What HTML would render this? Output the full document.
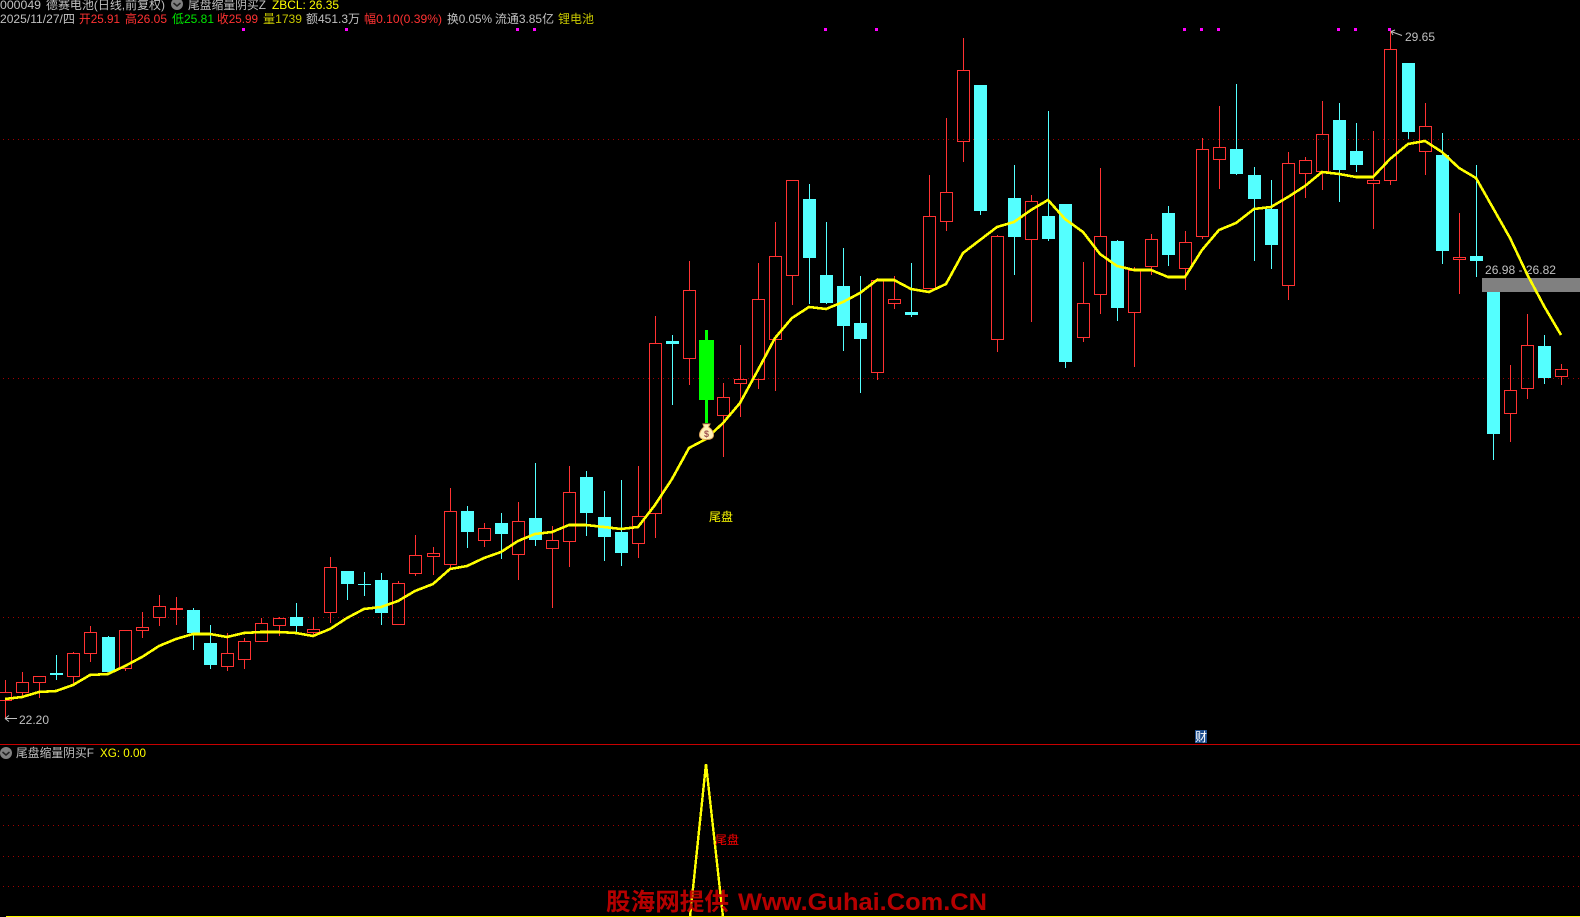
<!DOCTYPE html>
<html lang="zh-CN">
<head>
<meta charset="utf-8">
<title>000049 德赛电池</title>
<style>
html,body{margin:0;padding:0;background:#000;width:1580px;height:917px;overflow:hidden}
svg{display:block}
text{font-family:"Liberation Sans","WenQuanYi Zen Hei","Noto Sans CJK SC",sans-serif;font-size:12px}
.g{fill:#c0c0c0}.r{fill:#ff3232}.y{fill:#ffff00}.o{fill:#c8c800}
</style>
</head>
<body>
<svg width="1580" height="917" viewBox="0 0 1580 917" xmlns="http://www.w3.org/2000/svg">
<rect width="1580" height="917" fill="#000"/>

<!-- dotted grid -->
<path d="M3 139.5H1580M3 378.5H1580M3 617.5H1580M3 795.5H1580M3 825.5H1580M3 856.5H1580M3 886.5H1580" stroke="#a00000" stroke-width="1" stroke-dasharray="1 4" fill="none" shape-rendering="crispEdges"/>

<!-- red candles -->
<g shape-rendering="crispEdges" fill="none" stroke="#ff3232" stroke-width="1">
<path d="M5.5 680V692M-.5 692.5h12v8h-12zM5.5 700V719
M22.5 672V682M16.5 682.5h12v10h-12zM22.5 692V696
M33.5 676.5h12v6h-12zM39.5 682V698
M73.5 652V653M67.5 653.5h12v23h-12zM73.5 676V684
M90.5 626V632M84.5 632.5h12v21h-12zM90.5 653V662
M119.5 630.5h12v38h-12zM125.5 668V671
M142.5 612V627M136.5 627.5h12v3h-12zM142.5 630V638
M159.5 595V606M153.5 606.5h12v11h-12zM159.5 617V626
M176.5 597V625M170.5 608.5h12v1h-12z
M227.5 633V653M221.5 653.5h12v13h-12zM227.5 666V671
M244.5 638V641M238.5 641.5h12v18h-12zM244.5 659V669
M261.5 618V623M255.5 623.5h12v18h-12z
M279.5 617V618M273.5 618.5h12v7h-12zM279.5 625V636
M313.5 617V629M307.5 629.5h12v3h-12zM313.5 632V636
M330.5 557V567M324.5 567.5h12v45h-12zM330.5 612V623
M398.5 581V583M392.5 583.5h12v41h-12z
M415.5 535V555M409.5 555.5h12v18h-12zM415.5 573V576
M433.5 547V553M427.5 553.5h12v3h-12zM433.5 556V575
M450.5 488V511M444.5 511.5h12v53h-12zM450.5 564V569
M484.5 523V528M478.5 528.5h12v12h-12zM484.5 540V547
M518.5 502V521M512.5 521.5h12v33h-12zM518.5 554V580
M552.5 526V540M546.5 540.5h12v8h-12zM552.5 548V608
M569.5 466V492M563.5 492.5h12v49h-12zM569.5 541V567
M638.5 466V516M632.5 516.5h12v27h-12zM638.5 543V558
M655.5 316V343M649.5 343.5h12v170h-12zM655.5 513V538
M689.5 261V290M683.5 290.5h12v68h-12zM689.5 358V385
M723.5 383V397M717.5 397.5h12v18h-12zM723.5 415V457
M740.5 345V379M734.5 379.5h12v4h-12zM740.5 383V417
M758.5 263V299M752.5 299.5h12v80h-12zM758.5 379V389
M775.5 222V256M769.5 256.5h12v83h-12zM775.5 339V391
M786.5 180.5h12v95h-12zM792.5 275V305
M877.5 278V280M871.5 280.5h12v92h-12zM877.5 372V380
M894.5 276V299M888.5 299.5h12v4h-12zM894.5 303V309
M929.5 175V216M923.5 216.5h12v72h-12z
M946.5 118V192M940.5 192.5h12v29h-12zM946.5 221V231
M963.5 38V70M957.5 70.5h12v71h-12zM963.5 141V162
M997.5 235V236M991.5 236.5h12v103h-12zM997.5 339V352
M1031.5 195V201M1025.5 201.5h12v38h-12zM1031.5 239V322
M1083.5 262V303M1077.5 303.5h12v34h-12zM1083.5 337V342
M1100.5 168V236M1094.5 236.5h12v58h-12zM1100.5 294V314
M1134.5 267V270M1128.5 270.5h12v42h-12zM1134.5 312V367
M1151.5 234V239M1145.5 239.5h12v27h-12zM1151.5 266V275
M1185.5 231V242M1179.5 242.5h12v26h-12zM1185.5 268V290
M1202.5 138V149M1196.5 149.5h12v87h-12zM1202.5 236V239
M1219.5 106V147M1213.5 147.5h12v12h-12zM1219.5 159V189
M1288.5 152V163M1282.5 163.5h12v122h-12zM1288.5 285V300
M1305.5 157V160M1299.5 160.5h12v13h-12zM1305.5 173V198
M1322.5 101V134M1316.5 134.5h12v37h-12zM1322.5 171V190
M1373.5 131V180M1367.5 180.5h12v3h-12zM1373.5 183V229
M1390.5 30V49M1384.5 49.5h12v131h-12zM1390.5 180V185
M1425.5 103V126M1419.5 126.5h12v25h-12zM1425.5 151V175
M1459.5 213V257M1453.5 257.5h12v2h-12zM1459.5 259V294
M1510.5 365V390M1504.5 390.5h12v23h-12zM1510.5 413V442
M1527.5 314V345M1521.5 345.5h12v43h-12zM1527.5 388V399
M1561.5 364V369M1555.5 369.5h12v7h-12zM1561.5 376V385"/>
</g>

<!-- cyan candles -->
<g shape-rendering="crispEdges">
<path fill="none" stroke="#54ffff" stroke-width="1" d="M56.5 655V680M108.5 636V672M193.5 608V650M210.5 625V669M296.5 603V633M347.5 571V600M364.5 572V596M381.5 573V625M467.5 506V548M501.5 513V559M535.5 463V546M586.5 471V536M604.5 491V561M621.5 480V566M672.5 335V405M809.5 184V304M826.5 222V304M843.5 248V351M860.5 276V393M911.5 263V317M980.5 85V215M1014.5 165V275M1048.5 111V241M1065.5 204V368M1117.5 240V321M1168.5 206V266M1236.5 84V175M1254.5 167V261M1271.5 180V269M1339.5 103V202M1356.5 123V172M1408.5 63V139M1442.5 133V264M1476.5 165V277M1493.5 278V460M1544.5 335V384"/>
<path fill="#54ffff" d="M50 673h13v2h-13zM102 637h13v35h-13zM187 610h13v23h-13zM204 643h13v22h-13zM290 617h13v9h-13zM341 571h13v13h-13zM358 584h13v1h-13zM375 580h13v33h-13zM461 511h13v21h-13zM495 523h13v11h-13zM529 518h13v22h-13zM580 477h13v36h-13zM598 517h13v20h-13zM615 532h13v21h-13zM666 341h13v3h-13zM803 199h13v59h-13zM820 275h13v28h-13zM837 286h13v40h-13zM854 323h13v16h-13zM905 312h13v3h-13zM974 85h13v126h-13zM1008 198h13v39h-13zM1042 216h13v23h-13zM1059 204h13v158h-13zM1111 241h13v67h-13zM1162 213h13v42h-13zM1230 149h13v25h-13zM1248 175h13v24h-13zM1265 209h13v36h-13zM1333 120h13v50h-13zM1350 151h13v14h-13zM1402 63h13v69h-13zM1436 155h13v96h-13zM1470 256h13v5h-13zM1487 278h13v156h-13zM1538 346h13v32h-13z"/>
</g>

<!-- green marker candle -->
<g shape-rendering="crispEdges" fill="#00ff00">
<rect x="699" y="340" width="15" height="60"/>
<rect x="705" y="330" width="3" height="93"/>
</g>

<!-- grey band + label -->
<text x="1485" y="274" textLength="71" lengthAdjust="spacingAndGlyphs" class="g">26.98 - 26.82</text>
<rect x="1482" y="278" width="98" height="14" fill="#808080"/>

<!-- yellow MA line -->
<polyline shape-rendering="crispEdges" fill="none" stroke="#ffff00" stroke-width="2.6" points="5,699 22,697 39,692 56,691 73,685 90,675 108,674 125,666 142,657 159,646 176,639 193,634 210,634 227,637 244,633 261,632 279,632 296,633 313,636 330,629 347,618 364,609 381,607 398,601 415,591 433,584 450,569 467,566 484,558 501,552 518,541 535,534 552,532 569,525 586,525 604,527 621,529 638,527 655,505 672,479 689,448 706,439 723,423 740,403 758,370 775,338 792,318 809,307 826,309 843,302 860,293 877,280 894,280 911,289 929,292 946,284 963,253 980,240 997,227 1014,222 1031,210 1048,200 1065,219 1083,232 1100,254 1117,266 1134,270 1151,270 1168,277 1185,277 1202,250 1219,230 1236,223 1254,209 1271,207 1288,197 1305,186 1322,172 1339,174 1356,177 1373,177 1390,159 1408,144 1425,141 1442,152 1459,168 1476,178 1493,208 1510,238 1527,274 1544,306 1561,335"/>

<!-- magenta marks -->
<path fill="#ff00ff" shape-rendering="crispEdges" d="M242 28h3v3h-3zM345 28h3v3h-3zM516 28h3v3h-3zM533 28h3v3h-3zM824 28h3v3h-3zM875 28h3v3h-3zM1183 28h3v3h-3zM1200 28h3v3h-3zM1217 28h3v3h-3zM1337 28h3v3h-3zM1354 28h3v3h-3zM1388 28h3v3h-3z"/>

<!-- high/low labels -->
<path d="M1402 35.5L1391 31.5M1391 31.5L1395 30M1391 31.5L1393 35" stroke="#c0c0c0" stroke-width="1" fill="none"/>
<text x="1405" y="41" textLength="30" lengthAdjust="spacingAndGlyphs" class="g">29.65</text>
<path d="M5 718.5H17M5 718.5L9 715.5M5 718.5L9 721.5" stroke="#c0c0c0" stroke-width="1" fill="none"/>
<text x="19" y="724" textLength="30" lengthAdjust="spacingAndGlyphs" class="g">22.20</text>

<!-- money bag -->
<g>
<path d="M703 424h7l-1.500 3c3 2 5 5 5 8 0 3-2 4.500-7 4.500s-7-1.500-7-4.500c0-3 2-6 4.500-8z" fill="#fff0b8" stroke="#e0a860" stroke-width="1"/>
<text x="706.500" y="437" text-anchor="middle" style="font-size:9px;font-weight:bold" fill="#a05050">$</text>
</g>

<text x="709" y="521" textLength="24" lengthAdjust="spacingAndGlyphs" class="y">尾盘</text>

<!-- panel separator -->
<rect x="0" y="744" width="1580" height="1" fill="#c80000"/>
<rect x="1195" y="730" width="12" height="13" fill="#1f4f8f"/>
<text x="1195" y="741" style="font-size:12px" fill="#fff">财</text>

<!-- header rows -->
<text x="0" y="9" textLength="41" lengthAdjust="spacingAndGlyphs" class="g">000049</text>
<text x="46" y="9" textLength="119" lengthAdjust="spacingAndGlyphs" class="g">德赛电池(日线,前复权)</text>
<circle cx="177" cy="4" r="6" fill="#808080"/>
<path d="M173.500 3l3.500 3 3.500-3" stroke="#222" stroke-width="1.500" fill="none"/>
<text x="188" y="9" textLength="78" lengthAdjust="spacingAndGlyphs" class="g">尾盘缩量阴买Z</text>
<text x="272" y="9" textLength="67" lengthAdjust="spacingAndGlyphs" class="y">ZBCL: 26.35</text>

<text x="0" y="23" textLength="75" lengthAdjust="spacingAndGlyphs" class="g">2025/11/27/四</text>
<text x="79" y="23" textLength="41" lengthAdjust="spacingAndGlyphs" class="r">开25.91</text>
<text x="125" y="23" textLength="42" lengthAdjust="spacingAndGlyphs" class="r">高26.05</text>
<text x="172" y="23" textLength="42" lengthAdjust="spacingAndGlyphs" fill="#00e600">低25.81</text>
<text x="217" y="23" textLength="41" lengthAdjust="spacingAndGlyphs" class="r">收25.99</text>
<text x="263" y="23" textLength="39" lengthAdjust="spacingAndGlyphs" class="o">量1739</text>
<text x="306" y="23" textLength="54" lengthAdjust="spacingAndGlyphs" class="g">额451.3万</text>
<text x="364" y="23" textLength="78" lengthAdjust="spacingAndGlyphs" class="r">幅0.10(0.39%)</text>
<text x="447" y="23" textLength="45" lengthAdjust="spacingAndGlyphs" class="g">换0.05%</text>
<text x="495" y="23" textLength="59" lengthAdjust="spacingAndGlyphs" class="g">流通3.85亿</text>
<text x="558" y="23" textLength="36" lengthAdjust="spacingAndGlyphs" class="o">锂电池</text>

<!-- sub panel -->
<circle cx="6" cy="753" r="6" fill="#808080"/>
<path d="M2.500 752l3.500 3 3.500-3" stroke="#222" stroke-width="1.500" fill="none"/>
<text x="16" y="757" textLength="78" lengthAdjust="spacingAndGlyphs" class="g">尾盘缩量阴买F</text>
<text x="100" y="757" textLength="46" lengthAdjust="spacingAndGlyphs" class="y">XG: 0.00</text>

<path shape-rendering="crispEdges" fill="none" stroke="#ffff00" stroke-width="1" d="M6 916.500H1580"/>
<polyline shape-rendering="crispEdges" fill="none" stroke="#ffff00" stroke-width="2.4" points="690,917 706,764 723,917"/>
<text x="715" y="844" textLength="24" lengthAdjust="spacingAndGlyphs" fill="#ff0000">尾盘</text>

<!-- watermark -->
<text x="606" y="910" textLength="123" lengthAdjust="spacingAndGlyphs" style="font-size:24px;font-weight:bold;font-family:'Noto Sans CJK SC','Liberation Sans',sans-serif" fill="#c40000" fill-opacity=".92">股海网提供</text>
<text x="738" y="910" textLength="249" lengthAdjust="spacingAndGlyphs" style="font-size:24px;font-weight:bold" fill="#c40000" fill-opacity=".92">Www.Guhai.Com.CN</text>
</svg>
</body>
</html>
